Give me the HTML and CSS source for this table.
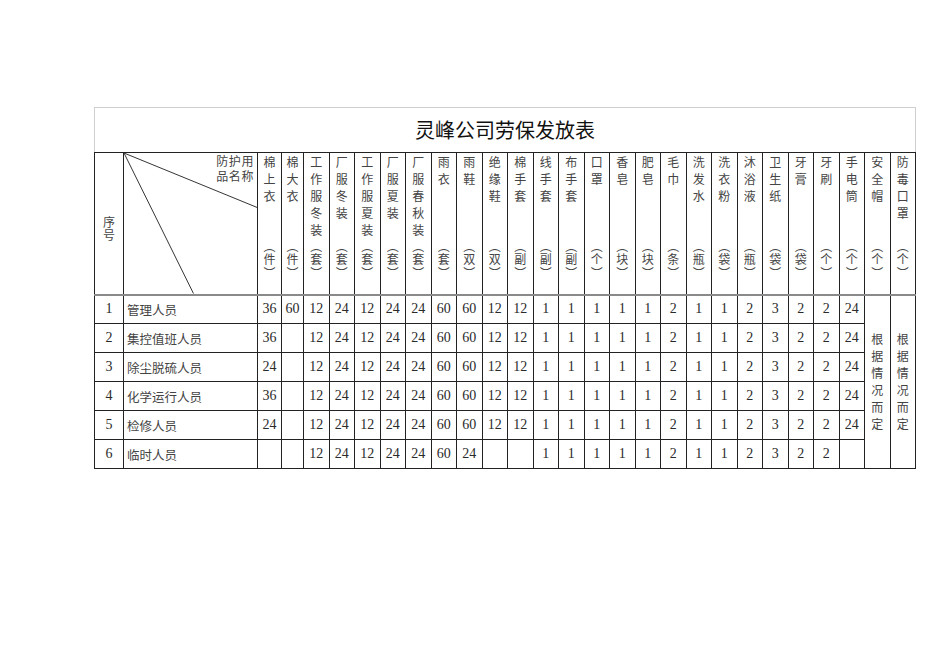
FILE: index.html
```html
<!DOCTYPE html>
<html lang="zh-CN">
<head>
<meta charset="utf-8">
<title>灵峰公司劳保发放表</title>
<link rel="stylesheet" href="styles.css">
</head>
<body>
<div class="page">
<table class="sheet">
<colgroup>
<col class="c-no"><col class="c-name"><col class="c-a"><col class="c-b">
<col><col><col><col><col><col><col><col><col><col><col><col>
<col><col><col><col><col><col><col><col><col><col><col><col>
</colgroup>
<tr class="title-row"><th colspan="28" class="title">灵峰公司劳保发放表</th></tr>
<tr class="head-row">
<th class="h-no"><span class="stack">序号</span></th>
<th class="h-name"><svg class="diag" viewBox="0 0 134 142" preserveAspectRatio="none"><line x1="0" y1="0" x2="134" y2="55"/><line x1="0" y1="0" x2="70" y2="142"/></svg><span class="h-label">防护用</span><span class="h-label">品名称</span></th>
<th class="h-item"><div class="item"><span class="item-name">棉上衣</span><span class="item-unit"><span>︵</span><span>件</span><span>︶</span></span></div></th>
<th class="h-item"><div class="item"><span class="item-name">棉大衣</span><span class="item-unit"><span>︵</span><span>件</span><span>︶</span></span></div></th>
<th class="h-item"><div class="item"><span class="item-name">工作服冬装</span><span class="item-unit"><span>︵</span><span>套</span><span>︶</span></span></div></th>
<th class="h-item"><div class="item"><span class="item-name">厂服冬装</span><span class="item-unit"><span>︵</span><span>套</span><span>︶</span></span></div></th>
<th class="h-item"><div class="item"><span class="item-name">工作服夏装</span><span class="item-unit"><span>︵</span><span>套</span><span>︶</span></span></div></th>
<th class="h-item"><div class="item"><span class="item-name">厂服夏装</span><span class="item-unit"><span>︵</span><span>套</span><span>︶</span></span></div></th>
<th class="h-item"><div class="item"><span class="item-name">厂服春秋装</span><span class="item-unit"><span>︵</span><span>套</span><span>︶</span></span></div></th>
<th class="h-item"><div class="item"><span class="item-name">雨衣</span><span class="item-unit"><span>︵</span><span>套</span><span>︶</span></span></div></th>
<th class="h-item"><div class="item"><span class="item-name">雨鞋</span><span class="item-unit"><span>︵</span><span>双</span><span>︶</span></span></div></th>
<th class="h-item"><div class="item"><span class="item-name">绝缘鞋</span><span class="item-unit"><span>︵</span><span>双</span><span>︶</span></span></div></th>
<th class="h-item"><div class="item"><span class="item-name">棉手套</span><span class="item-unit"><span>︵</span><span>副</span><span>︶</span></span></div></th>
<th class="h-item"><div class="item"><span class="item-name">线手套</span><span class="item-unit"><span>︵</span><span>副</span><span>︶</span></span></div></th>
<th class="h-item"><div class="item"><span class="item-name">布手套</span><span class="item-unit"><span>︵</span><span>副</span><span>︶</span></span></div></th>
<th class="h-item"><div class="item"><span class="item-name">口罩</span><span class="item-unit"><span>︵</span><span>个</span><span>︶</span></span></div></th>
<th class="h-item"><div class="item"><span class="item-name">香皂</span><span class="item-unit"><span>︵</span><span>块</span><span>︶</span></span></div></th>
<th class="h-item"><div class="item"><span class="item-name">肥皂</span><span class="item-unit"><span>︵</span><span>块</span><span>︶</span></span></div></th>
<th class="h-item"><div class="item"><span class="item-name">毛巾</span><span class="item-unit"><span>︵</span><span>条</span><span>︶</span></span></div></th>
<th class="h-item"><div class="item"><span class="item-name">洗发水</span><span class="item-unit"><span>︵</span><span>瓶</span><span>︶</span></span></div></th>
<th class="h-item"><div class="item"><span class="item-name">洗衣粉</span><span class="item-unit"><span>︵</span><span>袋</span><span>︶</span></span></div></th>
<th class="h-item"><div class="item"><span class="item-name">沐浴液</span><span class="item-unit"><span>︵</span><span>瓶</span><span>︶</span></span></div></th>
<th class="h-item"><div class="item"><span class="item-name">卫生纸</span><span class="item-unit"><span>︵</span><span>袋</span><span>︶</span></span></div></th>
<th class="h-item"><div class="item"><span class="item-name">牙膏</span><span class="item-unit"><span>︵</span><span>袋</span><span>︶</span></span></div></th>
<th class="h-item"><div class="item"><span class="item-name">牙刷</span><span class="item-unit"><span>︵</span><span>个</span><span>︶</span></span></div></th>
<th class="h-item"><div class="item"><span class="item-name">手电筒</span><span class="item-unit"><span>︵</span><span>个</span><span>︶</span></span></div></th>
<th class="h-item"><div class="item"><span class="item-name">安全帽</span><span class="item-unit"><span>︵</span><span>个</span><span>︶</span></span></div></th>
<th class="h-item"><div class="item"><span class="item-name">防毒口罩</span><span class="item-unit"><span>︵</span><span>个</span><span>︶</span></span></div></th>
</tr>
<tr class="data-row">
<td class="num">1</td><td class="name">管理人员</td>
<td class="num">36</td><td class="num">60</td><td class="num">12</td><td class="num">24</td><td class="num">12</td><td class="num">24</td><td class="num">24</td><td class="num">60</td><td class="num">60</td><td class="num">12</td><td class="num">12</td>
<td class="num">1</td><td class="num">1</td><td class="num">1</td><td class="num">1</td><td class="num">1</td><td class="num">2</td><td class="num">1</td><td class="num">1</td><td class="num">2</td><td class="num">3</td><td class="num">2</td><td class="num">2</td><td class="num">24</td>
<td class="merged" rowspan="6"><span class="stack">根据情况而定</span></td>
<td class="merged" rowspan="6"><span class="stack">根据情况而定</span></td>
</tr>
<tr class="data-row">
<td class="num">2</td><td class="name">集控值班人员</td>
<td class="num">36</td><td class="num"></td><td class="num">12</td><td class="num">24</td><td class="num">12</td><td class="num">24</td><td class="num">24</td><td class="num">60</td><td class="num">60</td><td class="num">12</td><td class="num">12</td>
<td class="num">1</td><td class="num">1</td><td class="num">1</td><td class="num">1</td><td class="num">1</td><td class="num">2</td><td class="num">1</td><td class="num">1</td><td class="num">2</td><td class="num">3</td><td class="num">2</td><td class="num">2</td><td class="num">24</td>
</tr>
<tr class="data-row">
<td class="num">3</td><td class="name">除尘脱硫人员</td>
<td class="num">24</td><td class="num"></td><td class="num">12</td><td class="num">24</td><td class="num">12</td><td class="num">24</td><td class="num">24</td><td class="num">60</td><td class="num">60</td><td class="num">12</td><td class="num">12</td>
<td class="num">1</td><td class="num">1</td><td class="num">1</td><td class="num">1</td><td class="num">1</td><td class="num">2</td><td class="num">1</td><td class="num">1</td><td class="num">2</td><td class="num">3</td><td class="num">2</td><td class="num">2</td><td class="num">24</td>
</tr>
<tr class="data-row">
<td class="num">4</td><td class="name">化学运行人员</td>
<td class="num">36</td><td class="num"></td><td class="num">12</td><td class="num">24</td><td class="num">12</td><td class="num">24</td><td class="num">24</td><td class="num">60</td><td class="num">60</td><td class="num">12</td><td class="num">12</td>
<td class="num">1</td><td class="num">1</td><td class="num">1</td><td class="num">1</td><td class="num">1</td><td class="num">2</td><td class="num">1</td><td class="num">1</td><td class="num">2</td><td class="num">3</td><td class="num">2</td><td class="num">2</td><td class="num">24</td>
</tr>
<tr class="data-row">
<td class="num">5</td><td class="name">检修人员</td>
<td class="num">24</td><td class="num"></td><td class="num">12</td><td class="num">24</td><td class="num">12</td><td class="num">24</td><td class="num">24</td><td class="num">60</td><td class="num">60</td><td class="num">12</td><td class="num">12</td>
<td class="num">1</td><td class="num">1</td><td class="num">1</td><td class="num">1</td><td class="num">1</td><td class="num">2</td><td class="num">1</td><td class="num">1</td><td class="num">2</td><td class="num">3</td><td class="num">2</td><td class="num">2</td><td class="num">24</td>
</tr>
<tr class="data-row">
<td class="num">6</td><td class="name">临时人员</td>
<td class="num"></td><td class="num"></td><td class="num">12</td><td class="num">24</td><td class="num">12</td><td class="num">24</td><td class="num">24</td><td class="num">60</td><td class="num">24</td><td class="num"></td><td class="num"></td>
<td class="num">1</td><td class="num">1</td><td class="num">1</td><td class="num">1</td><td class="num">1</td><td class="num">2</td><td class="num">1</td><td class="num">1</td><td class="num">2</td><td class="num">3</td><td class="num">2</td><td class="num">2</td><td class="num"></td>
</tr>
</table>
</div>
</body>
</html>
```

FILE: styles.css
```css
html, body {
  margin: 0;
  padding: 0;
  background: #ffffff;
}

.page {
  padding: 107px 0 0 94px;
  font-family: "Noto Sans CJK SC", "Liberation Sans", sans-serif;
  color: #444444;
}

.sheet {
  border-collapse: collapse;
  table-layout: fixed;
  width: 822px;
}

.c-no { width: 29px; }
.c-name { width: 134px; }
.c-a { width: 24px; }
.c-b { width: 22px; }

.sheet th,
.sheet td {
  border: 1px solid #222222;
  padding: 0;
  font-weight: normal;
}

.title-row { height: 45px; }

.sheet .title {
  border-top: 1px solid #cfcfcf;
  border-left: 1px solid #cfcfcf;
  border-right: 1px solid #cfcfcf;
  border-bottom: 1px solid #222222;
  font-size: 20px;
  color: #111111;
  text-align: center;
  vertical-align: middle;
  line-height: 24px;
}

.head-row { height: 142px; }

.sheet .head-row th {
  border-bottom: 2px solid #8a8a8a;
  vertical-align: top;
}

.sheet .head-row .h-no {
  vertical-align: middle;
  padding-top: 14px;
}

.stack {
  display: inline-block;
  width: 1em;
  word-break: break-all;
  font-size: 12px;
  line-height: 13px;
  text-align: center;
}

.h-name {
  position: relative;
  text-align: right;
  padding-top: 2px;
}

.diag {
  position: absolute;
  left: 0;
  top: 0;
  width: 100%;
  height: 100%;
  overflow: visible;
}

.diag line {
  stroke: #333333;
  stroke-width: 1;
}

.h-label {
  display: block;
  font-size: 12px;
  line-height: 15px;
  padding-right: 3px;
  letter-spacing: 0.6px;
}

.item {
  height: 140px;
  display: flex;
  flex-direction: column;
  align-items: center;
}

.item-name {
  width: 1em;
  font-size: 12px;
  line-height: 17px;
  word-break: break-all;
  text-align: center;
}

.item-unit {
  margin-top: auto;
  margin-bottom: 14px;
  display: flex;
  flex-direction: column;
  align-items: center;
  font-size: 12px;
  line-height: 13.5px;
}

.data-row { height: 29px; }

.sheet .num {
  font-family: "Liberation Serif", "Times New Roman", serif;
  font-size: 14px;
  color: #2a2a2a;
  text-align: center;
  vertical-align: middle;
}

.sheet .name {
  font-size: 12.5px;
  text-align: left;
  vertical-align: middle;
  padding-left: 3px;
  white-space: nowrap;
}

.sheet .merged {
  vertical-align: middle;
  text-align: center;
}

.merged .stack {
  line-height: 17px;
}
```
